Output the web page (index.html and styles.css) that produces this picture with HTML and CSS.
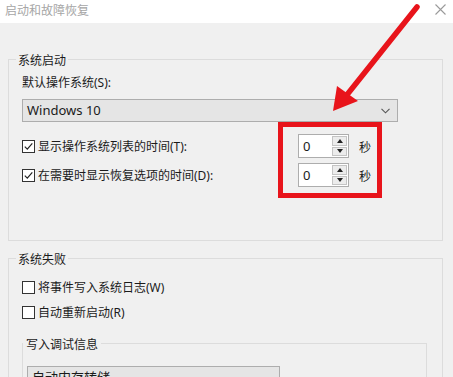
FILE: index.html
```html
<!DOCTYPE html>
<html lang="zh-CN">

<head>
    <meta charset="UTF-8">
    <meta name="viewport" content="width=device-width, initial-scale=1.0">
    <title>启动和故障恢复</title>
    <link rel="stylesheet" href="styles.css">
</head>

<body>
    <div class="window">
        <!--标题栏-->
        <div class="titlebar">
            <span class="title">启动和故障恢复</span>
            <svg class="close" width="11" height="11" viewBox="0 0 11 11">
                <path d="M0.5 0.5 L10.5 10.5 M10.5 0.5 L0.5 10.5" stroke="#9a9a9a" stroke-width="1.1" fill="none" />
            </svg>
        </div>

        <div class="content">
            <!--系统启动-->
            <fieldset class="group startup">
                <legend>系统启动</legend>
                <div class="field-label">默认操作系统(S):</div>
                <div class="select wide">
                    <span class="select-text">Windows 10</span>
                    <svg class="chevron" width="9" height="6" viewBox="0 0 9 6">
                        <path d="M0.5 0.8 L4.5 4.8 L8.5 0.8" stroke="#555" stroke-width="1.1" fill="none" />
                    </svg>
                </div>
                <div class="timing">
                    <div class="timing-labels">
                        <label class="check">
                            <span class="box"><svg width="11" height="11" viewBox="0 0 11 11"><path d="M1.8 5.6 L4.3 8.2 L9.3 2.4" stroke="#222" stroke-width="1.2" fill="none" /></svg></span>显示操作系统列表的时间(T):
                        </label>
                        <label class="check">
                            <span class="box"><svg width="11" height="11" viewBox="0 0 11 11"><path d="M1.8 5.6 L4.3 8.2 L9.3 2.4" stroke="#222" stroke-width="1.2" fill="none" /></svg></span>在需要时显示恢复选项的时间(D):
                        </label>
                    </div>
                    <div class="timing-values">
                        <div class="spin-row">
                            <div class="spin">
                                <span class="spin-value">0</span>
                                <span class="spin-btns"><span class="btn up"></span><span class="btn down"></span></span>
                            </div>
                            <span class="unit">秒</span>
                        </div>
                        <div class="spin-row">
                            <div class="spin">
                                <span class="spin-value">0</span>
                                <span class="spin-btns"><span class="btn up"></span><span class="btn down"></span></span>
                            </div>
                            <span class="unit">秒</span>
                        </div>
                    </div>
                </div>
            </fieldset>

            <!--系统失败-->
            <fieldset class="group failure">
                <legend>系统失败</legend>
                <label class="check"><span class="box"></span>将事件写入系统日志(W)</label>
                <label class="check second"><span class="box"></span>自动重新启动(R)</label>
                <fieldset class="group debug">
                    <legend>写入调试信息</legend>
                    <div class="select narrow">
                        <span class="select-text">自动内存转储</span>
                    </div>
                </fieldset>
            </fieldset>
        </div>

        <!--红色箭头标注-->
        <svg class="arrow" width="453" height="377" viewBox="0 0 453 377">
            <path d="M417 7 L346 96" stroke="#e8141b" stroke-width="5.5" stroke-linecap="round" fill="none" />
            <polygon points="333,111 337,86 358,101" fill="#e8141b" />
        </svg>
    </div>
</body>

</html>
```

FILE: styles.css
```css
html,
body {
    margin: 0;
    height: 100%;
    overflow: hidden;
}

body {
    font-family: "Noto Sans", "Noto Sans CJK SC", sans-serif;
    font-size: 12px;
    line-height: 17px;
    color: #1b1b1b;
    background: #f0f0f0;
}

.window {
    position: relative;
    width: 453px;
    height: 377px;
    overflow: hidden;
}

.titlebar {
    height: 23px;
    background: #fff;
    display: flex;
    justify-content: space-between;
    padding: 1px 7px 0 5px;
    box-sizing: border-box;
}

.title {
    color: #a6a6a6;
    font-family: "Noto Sans CJK SC", sans-serif;
}

.close {
    margin-top: 3px;
}

.content {
    padding: 28px 10px 0 8px;
}

/* 分组框 */
.group {
    margin: 0;
    border: 1px solid #dcdcdc;
    padding: 6px 15px 0 13px;
}

.group legend {
    padding: 0 2px;
    margin-left: -6px;
    font-family: "Noto Sans CJK SC", sans-serif;
}

.startup {
    padding-bottom: 42px;
}

.failure {
    margin-top: 9px;
    padding-top: 12px;
    padding-bottom: 20px;
}

.debug {
    margin-top: 14px;
    padding: 14px 10px 20px 4px;
}

.debug legend {
    margin-left: -4px;
    padding: 0 3px;
}

.field-label {
    margin-bottom: 8px;
}

/* 下拉框 */
.select {
    height: 23px;
    box-sizing: border-box;
    border: 1px solid #adadad;
    background: #e5e5e5;
    display: flex;
    align-items: center;
    justify-content: space-between;
    padding: 0 7px 0 4px;
}

.select.wide {
    width: 376px;
}

.select.narrow {
    width: 253px;
}

.select-text {
    font-size: 13px;
}

/* 复选框 */
.check {
    display: flex;
    align-items: center;
    height: 17px;
}

.check.second {
    margin-top: 8px;
}

.box {
    width: 13px;
    height: 13px;
    box-sizing: border-box;
    border: 1px solid #333;
    background: #fff;
    margin-right: 3px;
    display: flex;
    align-items: center;
    justify-content: center;
}

.box svg {
    display: block;
}

.timing {
    display: flex;
}

.timing-labels {
    width: 256px;
    padding-top: 12px;
    display: flex;
    flex-direction: column;
    gap: 12px;
}

.timing-labels .check {
    height: 24px;
    align-items: center;
}

.timing-labels .check+.check {
    margin-top: -7px;
}

/* 红框 */
.timing-values {
    width: 104px;
    box-sizing: border-box;
    border: 5px solid #e8141b;
    padding: 7px 5px 6px 15px;
    display: flex;
    flex-direction: column;
    gap: 5px;
}

.spin-row {
    display: flex;
    align-items: center;
    gap: 10px;
}

.spin {
    width: 51px;
    height: 24px;
    box-sizing: border-box;
    border: 1px solid #adadad;
    background: #fff;
    display: flex;
}

.spin-value {
    flex: 1;
    padding-left: 4px;
    font-size: 13px;
    line-height: 22px;
}

.spin-btns {
    width: 15px;
    padding: 1px;
    display: flex;
    flex-direction: column;
    gap: 1px;
}

.btn {
    flex: 1;
    border: 1px solid #c4c4c4;
    background: #ececec;
    display: flex;
    align-items: center;
    justify-content: center;
}

.btn::after {
    content: "";
    border-left: 3px solid transparent;
    border-right: 3px solid transparent;
}

.up::after {
    border-bottom: 4px solid #222;
}

.down::after {
    border-top: 4px solid #222;
}

.unit {
    font-family: "Noto Sans CJK SC", sans-serif;
}

.arrow {
    position: absolute;
    left: 0;
    top: 0;
    pointer-events: none;
}
```
